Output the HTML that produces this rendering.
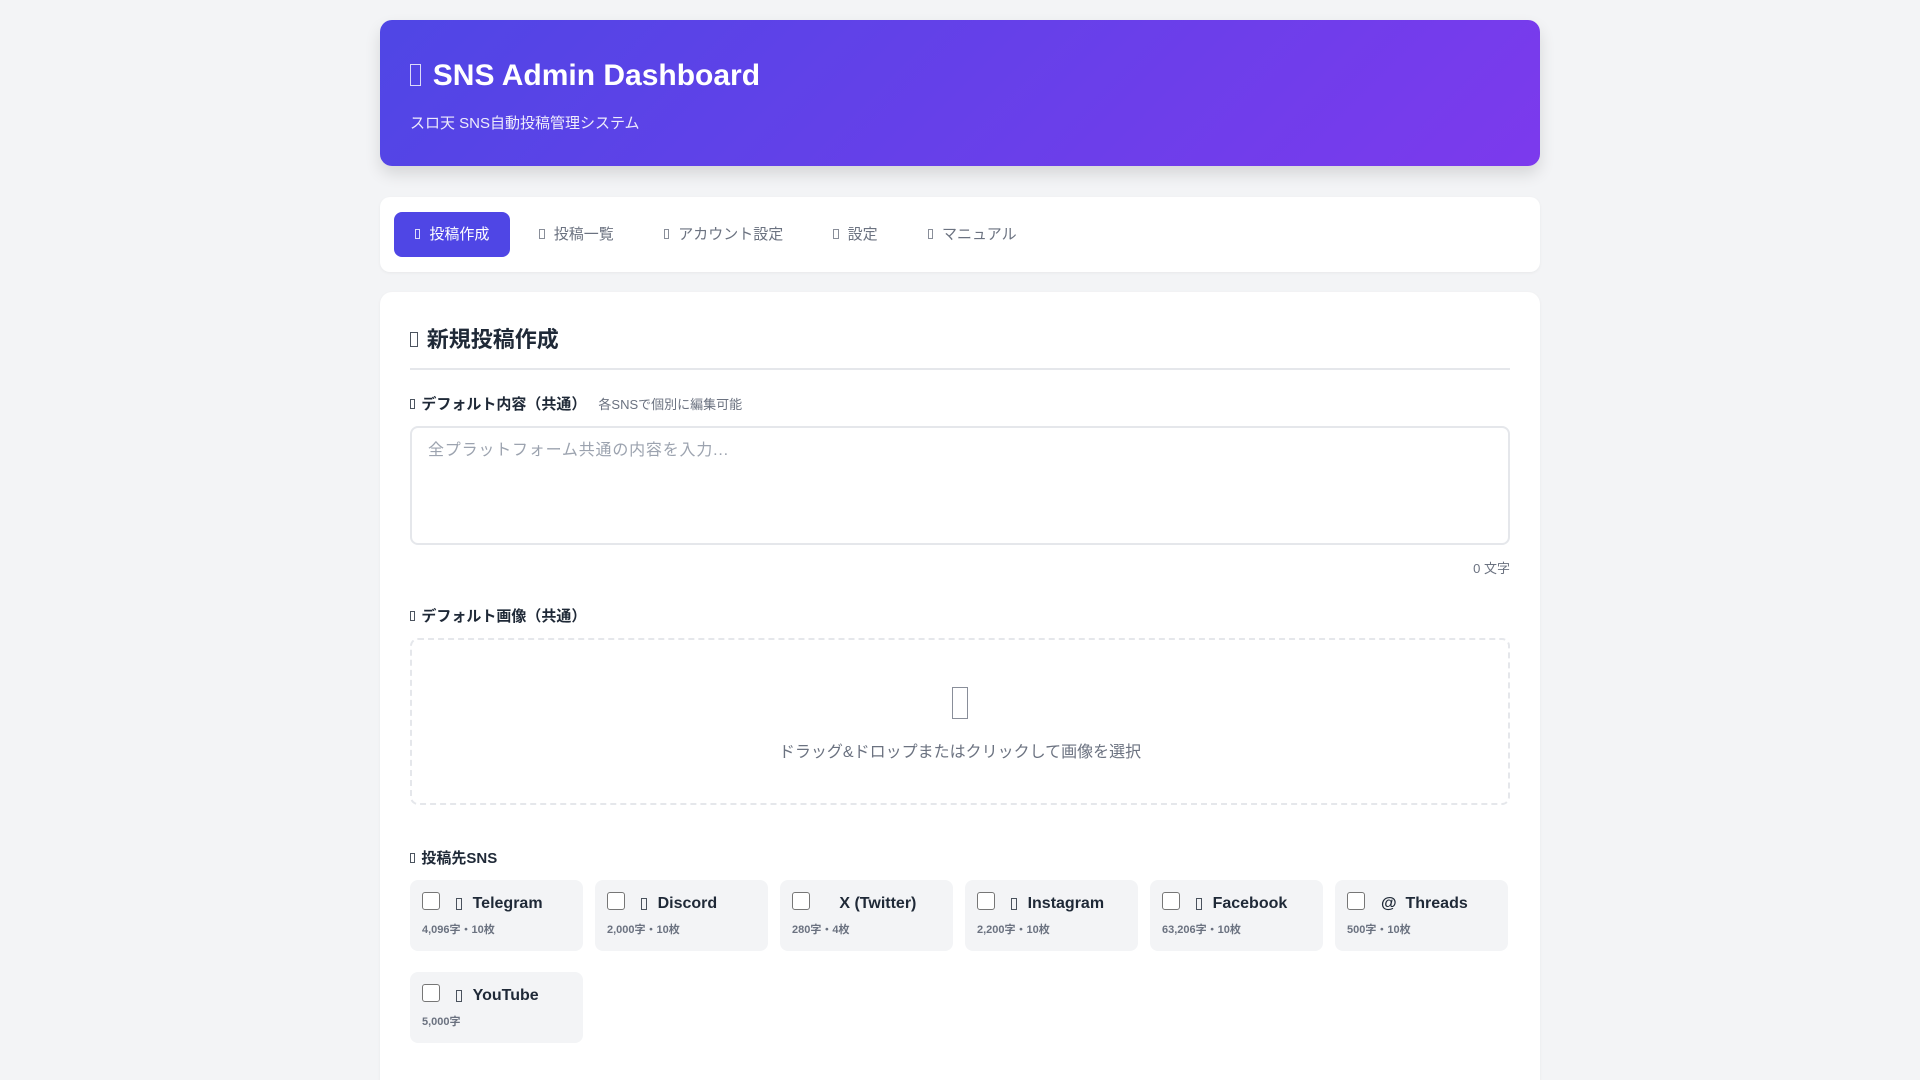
<!DOCTYPE html>
<html><head><meta charset="utf-8"><style>
*{box-sizing:border-box;margin:0;padding:0}
html,body{width:1920px;height:1080px;overflow:hidden}
body{background:#f3f4f6;font-family:"Liberation Sans","Noto Sans CJK JP",sans-serif;color:#1f2937}
.wrap{width:1160px;margin:0 auto;padding-top:20px}
.tofu{display:inline-block;width:0.36em;height:0.72em;border:1.5px solid currentColor;vertical-align:-0.02em;margin-right:0.4em;opacity:.8}
.hdr{height:146px;border-radius:12px;background:linear-gradient(135deg,#4f46e5,#7c3aed);color:#fff;padding:38px 30px;box-shadow:0 8px 16px rgba(0,0,0,.12)}
.hdr h1{font-size:30px;font-weight:bold;line-height:36px}
.hdr p{font-size:15px;margin-top:18px;opacity:.9}
.nav{margin-top:31px;height:75px;background:#fff;border-radius:10px;padding:15px 14px;display:flex;gap:8px;box-shadow:0 1px 3px rgba(0,0,0,.05)}
.nav a{font-size:15px;color:#6b7280;padding:0 21px;height:45px;line-height:45px;border-radius:8px}
.nav a .tofu{margin-right:0.6em}
.nav a.act{background:#4f46e5;color:#fff}
.card{margin-top:20px;background:#fff;border-radius:12px 12px 0 0;padding:30px;height:789px;box-shadow:0 1px 3px rgba(0,0,0,.05)}
.card h2{font-size:22px;font-weight:bold;padding-top:0;padding-bottom:14px;border-bottom:2px solid #e5e7eb}
.lbl{font-size:15px;font-weight:bold;margin-top:23px;margin-bottom:12px}
.lbl small{font-size:13px;font-weight:normal;color:#6b7280;margin-left:12px}
.ta{height:119px;border:2px solid #e5e7eb;border-radius:8px;padding:8px 16px;color:#9ca3af;font-size:16px;letter-spacing:.8px}
.cnt{text-align:right;font-size:13px;color:#6b7280;margin-top:13px}
.drop{height:167px;border:2px dashed #e5e7eb;border-radius:8px;text-align:center;color:#6b7280;font-size:16px;padding-top:42px}
.drop .ic{font-size:44px;line-height:44px;margin-bottom:12px}
.drop .ic .tofu{margin:0}
.grid{display:grid;grid-template-columns:repeat(6,173px);gap:21px 12px}
.sns{height:71px;background:#f3f4f6;border-radius:8px;padding:12px 12px}
.sns .t{display:flex;align-items:center;font-size:16px;font-weight:bold;height:24px}
.cb{width:18px;height:18px;border:1.5px solid #767676;border-radius:3px;background:#fff;margin-right:16px;margin-top:-6px}
.sns .s{font-size:11px;color:#6b7280;margin-top:5px;font-weight:bold}
</style></head><body><div class="wrap" style="margin-bottom:0">
<div class="hdr"><h1><span class="tofu"></span>SNS Admin Dashboard</h1><p>スロ天 SNS自動投稿管理システム</p></div>
<div class="nav"><a class="act"><span class="tofu"></span>投稿作成</a><a><span class="tofu"></span>投稿一覧</a><a><span class="tofu"></span>アカウント設定</a><a><span class="tofu"></span>設定</a><a><span class="tofu"></span>マニュアル</a></div>
<div class="card">
<h2><span class="tofu"></span>新規投稿作成</h2>
<div class="lbl"><span class="tofu"></span>デフォルト内容（共通）<small>各SNSで個別に編集可能</small></div>
<div class="ta">全プラットフォーム共通の内容を入力...</div>
<div class="cnt">0 文字</div>
<div class="lbl" style="margin-top:28px"><span class="tofu"></span>デフォルト画像（共通）</div>
<div class="drop"><div class="ic"><span class="tofu"></span></div>ドラッグ&amp;ドロップまたはクリックして画像を選択</div>
<div class="lbl" style="margin-top:42px"><span class="tofu"></span>投稿先SNS</div>
<div class="grid">
<div class="sns"><div class="t"><span class="cb"></span><span class="tofu"></span>&nbsp;Telegram</div><div class="s">4,096字・10枚</div></div>
<div class="sns"><div class="t"><span class="cb"></span><span class="tofu"></span>&nbsp;Discord</div><div class="s">2,000字・10枚</div></div>
<div class="sns"><div class="t"><span class="cb"></span>&nbsp;&nbsp;&nbsp;X (Twitter)</div><div class="s">280字・4枚</div></div>
<div class="sns"><div class="t"><span class="cb"></span><span class="tofu"></span>&nbsp;Instagram</div><div class="s">2,200字・10枚</div></div>
<div class="sns"><div class="t"><span class="cb"></span><span class="tofu"></span>&nbsp;Facebook</div><div class="s">63,206字・10枚</div></div>
<div class="sns"><div class="t"><span class="cb"></span>@&nbsp;&nbsp;Threads</div><div class="s">500字・10枚</div></div>
<div class="sns"><div class="t"><span class="cb"></span><span class="tofu"></span>&nbsp;YouTube</div><div class="s">5,000字</div></div>
</div>
</div></div></body></html>
